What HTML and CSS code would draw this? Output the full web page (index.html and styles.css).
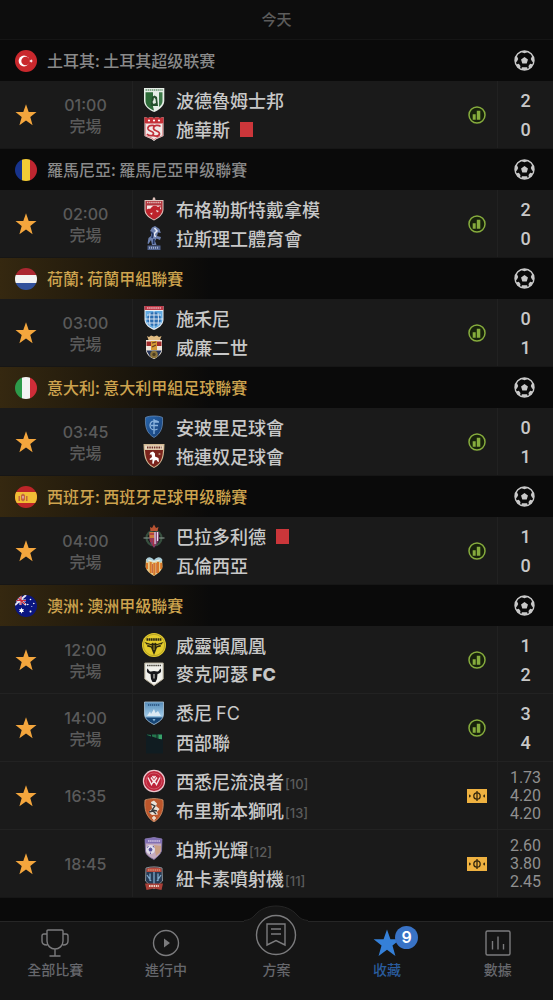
FILE: index.html
```html
<!DOCTYPE html>
<html lang="zh-Hant">
<head>
<meta charset="utf-8">
<meta name="viewport" content="width=device-width, initial-scale=1">
<title>收藏</title>
<link rel="stylesheet" href="styles.css">
</head>
<body>
<svg class="defs" aria-hidden="true">
  <defs>
    <clipPath id="round"><circle cx="11" cy="11" r="11"/></clipPath>
    <clipPath id="ballclip"><circle cx="10" cy="10" r="9"/></clipPath>
    <clipPath id="shield"><path d="M2.5 1H21.500V13C21.500 18 17 21 12 23.500C7 21 2.500 18 2.500 13Z"/></clipPath>
    <linearGradient id="sky" x1="0" y1="0" x2="0" y2="1"><stop offset="0" stop-color="#4f86b5"/><stop offset=".6" stop-color="#9dc8e6"/><stop offset="1" stop-color="#2d6293"/></linearGradient>
    <linearGradient id="blue" x1="0" y1="0" x2="1" y2="1"><stop offset="0" stop-color="#2866ad"/><stop offset="1" stop-color="#163e75"/></linearGradient>
  </defs>
  <symbol id="star" viewBox="0 0 22 22"><path d="M11 .3 13.700 8H21.500L15.300 12.900 17.600 21.300 11 16.400 4.400 21.300 6.700 12.900.5 8H8.300Z"/></symbol>
  <symbol id="ball" viewBox="0 0 20 20">
    <g clip-path="url(#ballclip)" fill="#c9c9c9">
      <path d="M10 6.600 13.300 9 12.100 12.900H7.900L6.700 9Z"/>
      <path d="M6.500 0H13.500L12.600 2.200 10 3 7.400 2.200ZM20 5V11.500L17.300 11.200 16 8.500 17.300 5.500ZM0 5V11.500L2.700 11.200 4 8.500 2.700 5.500ZM1 14 4.600 13.200 6.200 15.200 5.500 19H1ZM19 14 15.400 13.200 13.800 15.200 14.500 19H19ZM7.500 16.500H12.500L13.500 20H6.500Z"/>
    </g>
    <circle cx="10" cy="10" r="9" fill="none" stroke="#c9c9c9" stroke-width="1.400"/>
  </symbol>
  <symbol id="chart" viewBox="0 0 18 18"><circle cx="9" cy="9" r="8" fill="#17210c" stroke="#86ac3d" stroke-width="1.500"/><path d="M4.700 8.200H7.700V13.700H4.700ZM8.800 4.800H12.300V13.700H8.800Z" fill="#86ac3d"/></symbol>
  <symbol id="pitch" viewBox="0 0 20 14"><path fill="#eeb140" d="M0 0H20V14H0Z"/><g fill="none" stroke="#35280e" stroke-width="1.300"><circle cx="10" cy="7" r="3.200"/><path d="M10 2V12"/></g><path d="M2 5.500 3.600 6V8L2 8.500ZM18 5.500 16.400 6V8L18 8.500Z" fill="#35280e"/></symbol>

  <symbol id="flag-tr" viewBox="0 0 22 22"><circle cx="11" cy="11" r="11" fill="#c9282d"/><circle cx="9" cy="11" r="5.400" fill="#fff"/><circle cx="10.600" cy="11" r="4.300" fill="#c9282d"/><path d="M16.300 9.300 16.900 10.500 18.100 11 16.900 11.500 16.300 12.700 15.500 11.700 14.300 11 15.500 10.300Z" fill="#fff"/></symbol>
  <symbol id="flag-ro" viewBox="0 0 22 22"><g clip-path="url(#round)"><path fill="#17338c" d="M0 0H7V22H0Z"/><path fill="#f3cb35" d="M7 0H15V22H7Z"/><path fill="#bf2630" d="M15 0H22V22H15Z"/></g></symbol>
  <symbol id="flag-nl" viewBox="0 0 22 22"><g clip-path="url(#round)"><path fill="#ab2731" d="M0 0H22V7H0Z"/><path fill="#f3f3f3" d="M0 7H22V15H0Z"/><path fill="#31509b" d="M0 15H22V22H0Z"/></g></symbol>
  <symbol id="flag-it" viewBox="0 0 22 22"><g clip-path="url(#round)"><path fill="#2d9a4a" d="M0 0H7V22H0Z"/><path fill="#f3f3f3" d="M7 0H15V22H7Z"/><path fill="#cf2d38" d="M15 0H22V22H15Z"/></g></symbol>
  <symbol id="flag-es" viewBox="0 0 22 22"><g clip-path="url(#round)"><path fill="#bd2528" d="M0 0H22V22H0Z"/><path fill="#f1bd35" d="M0 6H22V17H0Z"/><path fill="#c4673f" d="M3.500 10H5V15H3.500ZM6 9 8 7.500 10 9V14L8 15.500 6 14ZM11 10H12.500V15H11Z"/><path fill="#dba19a" d="M7 10H9V12.500H7Z"/></g></symbol>
  <symbol id="flag-au" viewBox="0 0 22 22"><g clip-path="url(#round)"><path fill="#0b1680" d="M0 0H22V22H0Z"/><path d="M0 0 11 10M11 0 0 10M5.500 0V10M0 5.500H11" stroke="#e7e5ef" stroke-width="2"/><path d="M6 0V10M0 5.500H11M1 1 10 9" stroke="#c92b3c" stroke-width="1.100"/><g fill="#fff"><path d="M6.500 12.500 7.200 14.300 9 14.100 8 15.600 9 17.100 7.200 17 6.500 18.700 5.800 17 4 17.100 5 15.600 4 14.100 5.800 14.300Z"/><circle cx="15.500" cy="4.500" r=".8"/><circle cx="12.800" cy="9.500" r=".8"/><circle cx="18.800" cy="8.500" r=".8"/><circle cx="16.800" cy="11.500" r=".5"/><circle cx="15.500" cy="16.500" r="1"/></g></g></symbol>

  <symbol id="c-bodrum" viewBox="0 0 24 24"><path fill="#e6eee7" d="M2 0H22.300V13C22 18.500 17 22 12.200 24C7 22 2.300 18.500 2 13Z"/><path d="M3.500 2H21" stroke="#2f6b3c" stroke-width="1.200" stroke-dasharray="1.500 .6"/><path fill="#2d6b38" d="M3.500 4.200H11V18.500L12 22.500C7 20.500 3.500 17.500 3.500 13Z"/><path fill="#3d7a49" d="M17 4.200H20.500V13C20.500 15.500 19 17.500 17 19Z"/><path fill="#244f2c" d="M10 9 12.500 7.500 15 9 16 18H8.500Z"/><path fill="#dfe8df" d="M12 9.500 13.500 11 14 15 11.500 16 10.500 14 11.500 12Z"/></symbol>
  <symbol id="c-sivas" viewBox="0 0 24 24"><path fill="#f1e9e8" d="M2.500 0 6 1 9 0 12 1 15 0 18 1 21.500 0V19C18 21 15 21 12 24C9 21 6 21 2.500 19Z"/><path fill="#c53138" d="M2.500 0 6 1 9 0 12 1 15 0 18 1 21.500 0V6.500H2.500Z"/><g fill="#fff"><circle cx="7" cy="3.500" r="1.100"/><circle cx="12" cy="3.500" r="1.100"/><circle cx="17" cy="3.500" r="1.100"/></g><path d="M3.300 7V18.500C6 20.300 9.500 20 12 22.800 14.500 20 18 20.300 20.700 18.500V7" fill="none" stroke="#cf6064" stroke-width=".7"/><path d="M13 9.500C11 7.500 5 8.500 6 12C7 15 12 13.500 11.500 17C11 19.500 6.500 19 5 17M18.500 9.500C16.500 7.500 11.500 8 11.500 11.500C12 14.500 18 13.500 17.500 17C17 20 11.500 19.500 10 17.500" fill="none" stroke="#c1313a" stroke-width="1.700"/></symbol>
  <symbol id="c-dinamo" viewBox="0 0 24 24"><path fill="#dfc1bb" d="M11 .5H13L13.500 3H21.500V13C21 18 17 21 12 23.500C7 21 2.500 18 2.500 13V3H10.500Z"/><path fill="#b3363e" d="M3.500 4H20.500V13C20 17.500 16 20.500 12 22.500 8 20.500 4 17.500 3.500 13Z"/><path d="M5 5.500H19" stroke="#e0bcb9" stroke-width="1.400" stroke-dasharray="1.400 .7"/><path fill="#f2e9e8" d="M5 8.500H19V13L12 21 5 13Z"/><path fill="#bd232c" d="M3.800 14C6 10 7.500 13 9 11 11 8 14 8.500 16 10L19 8.500 18 12 20 13C19 18 15 20.500 12 22C8 20 5 18 3.800 14Z"/><path fill="#f0dfdd" d="M8 16.500 10.500 15.500 10 18ZM14 13 17 14 15 15.500Z"/></symbol>
  <symbol id="c-iasi" viewBox="0 0 24 24"><path fill="#6d80ae" d="M10 1.500 13 0 17.500 3 18.800 7 16 6.500 15 10 19 11 18 14 14.500 12.500 13 15 14.500 19H10L9 14 6.500 18 5.500 17.500 6.500 12 9 10 9.500 6 8 5Z"/><path d="M12.500 2 15 5 12 8 13.500 11" fill="none" stroke="#e7ebf4" stroke-width="1.500"/><path d="M9 6 11 8 10 12M12 13 11.500 18" fill="none" stroke="#243561" stroke-width="1.700"/><path fill="#4f618c" d="M5.500 19.500H18.500V24H5.500Z"/><path d="M7 21.700H17" stroke="#a3afca" stroke-width="2" stroke-dasharray="1 1"/></symbol>
  <symbol id="c-zwolle" viewBox="0 0 24 24"><path fill="#eaeef3" d="M2.500 0H21.500V14C21 19 17 22 12 24C7 22 3 19 2.500 14Z"/><path fill="#bd3c4a" d="M2.500 0H21.500V4H2.500Z"/><path d="M5 2H19" stroke="#e6adb5" stroke-width="1.500" stroke-dasharray="1.500 .6"/><path fill="#61a9e1" d="M3.500 5H20.500V14C20 18.500 16 21 12 22.800C8 21 4 18.500 3.500 14Z"/><circle cx="12" cy="13" r="7" fill="#2b6cb0"/><path d="M12 5V23M3 13H21M8 7 7.500 13 8 19.500M16 7 16.500 13 16 19.500M5 9H19M5 17H19" stroke="#e5edf7" stroke-width=".9" fill="none"/></symbol>
  <symbol id="c-willem" viewBox="0 0 24 24"><path fill="#e1bc83" d="M5 1 7 2 9 .5 12 1.500 15 .5 17 2 19.500 1 18 5H6.500Z"/><path fill="#eee6db" d="M4 5H20V16C19 20 15 22.500 12 24C8 22.500 5 20 4 16Z"/><path fill="#a02c2c" d="M4.500 6.500H19.500V11H4.500Z"/><path fill="#d49a35" d="M9 6H15V15H9Z"/><path d="M10 8 14 7M10 12 14 10" stroke="#653c25" stroke-width="1.200"/><path fill="#25345a" d="M4.300 15.500H19.700L16 21.500H8Z"/><circle cx="12" cy="19.500" r="3.800" fill="#8b7339"/><circle cx="12" cy="19.500" r="1.700" fill="#4c3d23"/></symbol>
  <symbol id="c-empoli" viewBox="0 0 24 24"><path fill="url(#blue)" stroke="#6588b1" stroke-width=".8" d="M3.500 2.500C7 .5 17 .5 20.500 2.500 21 12 19.500 18 12 22.500 4.500 18 3 12 3.500 2.500Z"/><path d="M16 6.500C12 4.500 8 6.500 8 10.500S11.500 16 15.500 14M12 4V19M9 10.500H16M12.500 7H17" fill="none" stroke="#8ab3dd" stroke-width="1.300"/></symbol>
  <symbol id="c-torino" viewBox="0 0 24 24"><path fill="#d1b893" d="M1.500 0H22.500C22 10 22.500 19 12 24C1.500 19 2 10 1.500 0Z"/><path fill="#7a241d" d="M3 6H21C20.500 14 19 19.500 12 23C5 19.500 3.500 14 3 6Z"/><path fill="#ead9c3" d="M2.700 1.500H21.300L21 5.500H3Z"/><path d="M5 3.500H19.500" stroke="#6d3226" stroke-width="2" stroke-dasharray="1.500 .8"/><path d="M8.500 8.500 11 7.500 13 9.500 13 12.500 16.500 14 17 18 15.500 17.500 14.500 16 12.500 16.500 11.500 20 10.300 19.500 10.500 15.500 8 16 7.500 15 10 13 9.500 10.500 7.500 10.500Z" fill="#fff"/><circle cx="17.500" cy="10" r="1.100" fill="#b58d78"/></symbol>
  <symbol id="c-vallad" viewBox="0 0 24 24"><circle cx="12" cy="14" r="7.500" fill="none" stroke="#37503f" stroke-width="2.200"/><path d="M1.500 14H22.500" stroke="#7d8d84" stroke-width="1.200"/><path fill="#b85332" d="M8 3 10 4 12 .5 14 4 16.500 3 15.500 7H8.500Z"/><path fill="#7e3f6b" d="M7.500 8H17V16C16 19.500 13.500 21 12 24C10.500 21 8 19.500 7.500 16Z"/><path fill="#cc7b3c" d="M7.500 8H12V14H7.500Z"/><path d="M13 8V20M15.500 8V17" stroke="#eadeed" stroke-width="1.200"/><path d="M8 10H12M9 14V18M11.500 14V22" stroke="#ac3040" stroke-width="1.300"/></symbol>
  <symbol id="c-valencia" viewBox="0 0 24 24"><path fill="#e8c886" d="M4 6 8 5.500 12 9 16 5.500 20 6 20.500 14C19 19 15 21 12 23C9 21 5 19 3.500 14Z"/><path d="M5 10V16M8.700 9V20M12.300 10V22M16 9V20M19.200 10V16" stroke="#d87729" stroke-width="2"/><path d="M10.500 11V20M14.300 10V20" stroke="#b93f2d" stroke-width=".7"/><path fill="#a9ccd8" d="M4 7C6 3 9 4 12 7 15 4 18 3 20.500 7L19 9.500 15 8 12 9.500 8 8 5 9.500Z"/><path d="M6 7 12 8.500 18 7" stroke="#f0efe1" stroke-width="1.200" fill="none"/></symbol>
  <symbol id="c-wellington" viewBox="0 0 24 24"><circle cx="12" cy="12" r="12" fill="#e4cb2c"/><circle cx="12" cy="12" r="10.700" fill="none" stroke="#aa9823" stroke-width=".8"/><path d="M4.500 6.500H19.500" stroke="#2b2912" stroke-width="2.400" stroke-dasharray="1.700 .5"/><path fill="#28250f" d="M2.500 9 9 11 11 9.500 12 11 13 9.500 15 11 21.500 9 18.500 12.500 19 13.500 15 14.500 13.500 18.500 12 22 10.500 18.500 9 14.500 5 13.500 5.500 12.500Z"/><path d="M5 11.200 10 13M19 11.200 14 13M12 12V17" stroke="#cbb42e" stroke-width=".8"/></symbol>
  <symbol id="c-macarthur" viewBox="0 0 24 24"><path fill="#f1f1ec" stroke="#b2ab96" d="M2.800 1H21.200V17L12 23.500 2.800 17Z"/><path d="M5 3.500H19" stroke="#48453c" stroke-width="1.300" stroke-dasharray="1.500 .6"/><path fill="#15161a" d="M5.500 6.500C7 7.500 6.500 9.500 9 9.500L12 9 15 9.500C17.500 9.500 17 7.500 18.500 6.500 20 9.500 18.500 11.500 15.500 12L15 17 13.500 20H10.500L9 17 8.500 12C5.500 11.500 4 9.500 5.500 6.500Z"/><path d="M12 12V16.500" stroke="#e8e6df" stroke-width="1"/></symbol>
  <symbol id="c-sydney" viewBox="0 0 24 24"><g clip-path="url(#shield)"><path fill="url(#sky)" d="M0 0H24V24H0Z"/><path fill="#dce9f3" d="M5 15 8 10.500 9 13 12 8 13.500 12 16 10 19 15Z"/><path fill="#164575" d="M0 16.500H24V24H0Z"/><path d="M10.500 18 12 20.500 13.500 18Z" fill="#86b2d3"/></g><path d="M2.500 1H21.500V13C21.500 18 17 21 12 23.500 7 21 2.500 18 2.500 13Z" fill="none" stroke="#acc5d8" stroke-width=".8"/><path d="M6 4H18" stroke="#244f7b" stroke-width="1.500" stroke-dasharray="1.300 .7"/></symbol>
  <symbol id="c-western" viewBox="0 0 24 24"><path fill="#101c21" d="M4 4H21V23.500H4Z"/><path fill="#26764d" d="M5 4.500 9 5V6.500L5 5ZM10 4.500H14.500V8L10 6.500ZM15.500 4.200H20V9.500L15.500 8.500Z"/><path fill="#39a168" d="M17 5H20V9H17Z"/></symbol>
  <symbol id="c-wsw" viewBox="0 0 24 24"><circle cx="12" cy="12" r="11.200" fill="#edc4cb"/><circle cx="12" cy="12" r="10" fill="#bd243a"/><circle cx="12" cy="12" r="8" fill="none" stroke="#d66876" stroke-width=".7"/><path d="M6 8.500 9.500 15.500 12 11.500 14.500 15.500 18 8.500M9 8.500 12 13 15 8.500M10.500 7 12 9 13.500 7" fill="none" stroke="#f5e7e8" stroke-width="1.400"/></symbol>
  <symbol id="c-roar" viewBox="0 0 24 24"><path fill="#bc562b" stroke="#dda47a" stroke-width=".7" d="M3 2C9 0 15 0 21 2 22 11 20 19 12 24 4 19 2 11 3 2Z"/><path fill="#eae2d7" d="M9 4 12 2.500 15 5.500 14 8 17.500 11 15 14 16 16.500 10 17 6.500 14 10 10.500Z"/><path d="M9 6 13 8 10 12 15 13M7 14 11 13 14 16" fill="none" stroke="#383a3c" stroke-width="1.300"/><path d="M12 18V22.500M10 20H14" stroke="#eee2d5" stroke-width="1.500"/></symbol>
  <symbol id="c-perth" viewBox="0 0 24 24"><path fill="#c4abc0" stroke="#8072a5" stroke-width=".8" d="M3 2 12 .5 20 2 19.500 14C18 18 15 20 12 22.500 7 20 4 18 3.500 14Z"/><path fill="#8170b3" d="M3 2 12 .5 20 2V6.500H3.200Z"/><path d="M6 4H18" stroke="#d3c6e7" stroke-width="1.500" stroke-dasharray="1.500 .6"/><path fill="#c99f86" d="M12 8 19 9 18.500 15 14 19Z"/><circle cx="8.500" cy="12.500" r="4.500" fill="#dfdce9"/><path d="M8.500 11 10 12 9.500 14H7.500L7 12ZM5 10.500 6.500 9.500M8.500 15.500V17M11 9 12 10.500" fill="#56509b" stroke="#56509b"/></symbol>
  <symbol id="c-newcastle" viewBox="0 0 24 24"><path fill="#263a54" stroke="#a4a9ad" stroke-width=".8" d="M4 2C9 .5 15 .5 20 2L20.500 15 12 23 3.500 15Z"/><path fill="#b5483b" d="M4.500 2.500C9 1 15 1 19.500 2.500V6H4.500Z"/><path d="M6 4H18" stroke="#e2af8c" stroke-width="1.200" stroke-dasharray="1.500 .7"/><path d="M12 6V18M8 7.500V15M16 7.500V15M5 9 9 15M19 9 15 15" stroke="#7ea8ca" stroke-width="1.300"/><path fill="#aa4038" d="M3 17.500H21L19.500 24 12 22.500 4.500 24Z"/><path d="M7 20H17" stroke="#ebd5c9" stroke-width="2" stroke-dasharray="1.500 .8"/></symbol>
</svg>

<div class="app">
  <header class="date"><h1>今天</h1></header>
  <main class="list">
    <section class="league">
      <header class="league-head"><svg class="flag"><use href="#flag-tr"/></svg><h2>土耳其: 土耳其超级联赛</h2><svg class="ball"><use href="#ball"/></svg></header>
      <article class="match">
        <button class="fav" aria-label="取消收藏"><svg><use href="#star"/></svg></button>
        <div class="time"><time>01:00</time><span>完場</span></div>
        <div class="teams">
          <div class="team"><svg><use href="#c-bodrum"/></svg><span>波德魯姆士邦</span></div>
          <div class="team"><svg><use href="#c-sivas"/></svg><span>施華斯</span><i class="red-card"></i></div>
        </div>
        <button class="tool" aria-label="分析"><svg class="chart"><use href="#chart"/></svg></button>
        <div class="score"><span>2</span><span>0</span></div>
      </article>
    </section>
    <section class="league">
      <header class="league-head"><svg class="flag"><use href="#flag-ro"/></svg><h2>羅馬尼亞: 羅馬尼亞甲级聯賽</h2><svg class="ball"><use href="#ball"/></svg></header>
      <article class="match">
        <button class="fav" aria-label="取消收藏"><svg><use href="#star"/></svg></button>
        <div class="time"><time>02:00</time><span>完場</span></div>
        <div class="teams">
          <div class="team"><svg><use href="#c-dinamo"/></svg><span>布格勒斯特戴拿模</span></div>
          <div class="team"><svg><use href="#c-iasi"/></svg><span>拉斯理工體育會</span></div>
        </div>
        <button class="tool" aria-label="分析"><svg class="chart"><use href="#chart"/></svg></button>
        <div class="score"><span>2</span><span>0</span></div>
      </article>
    </section>
    <section class="league top">
      <header class="league-head"><svg class="flag"><use href="#flag-nl"/></svg><h2>荷蘭: 荷蘭甲組聯賽</h2><svg class="ball"><use href="#ball"/></svg></header>
      <article class="match">
        <button class="fav" aria-label="取消收藏"><svg><use href="#star"/></svg></button>
        <div class="time"><time>03:00</time><span>完場</span></div>
        <div class="teams">
          <div class="team"><svg><use href="#c-zwolle"/></svg><span>施禾尼</span></div>
          <div class="team"><svg><use href="#c-willem"/></svg><span>威廉二世</span></div>
        </div>
        <button class="tool" aria-label="分析"><svg class="chart"><use href="#chart"/></svg></button>
        <div class="score"><span>0</span><span>1</span></div>
      </article>
    </section>
    <section class="league top">
      <header class="league-head"><svg class="flag"><use href="#flag-it"/></svg><h2>意大利: 意大利甲組足球聯賽</h2><svg class="ball"><use href="#ball"/></svg></header>
      <article class="match">
        <button class="fav" aria-label="取消收藏"><svg><use href="#star"/></svg></button>
        <div class="time"><time>03:45</time><span>完場</span></div>
        <div class="teams">
          <div class="team"><svg><use href="#c-empoli"/></svg><span>安玻里足球會</span></div>
          <div class="team"><svg><use href="#c-torino"/></svg><span>拖連奴足球會</span></div>
        </div>
        <button class="tool" aria-label="分析"><svg class="chart"><use href="#chart"/></svg></button>
        <div class="score"><span>0</span><span>1</span></div>
      </article>
    </section>
    <section class="league top">
      <header class="league-head"><svg class="flag"><use href="#flag-es"/></svg><h2>西班牙: 西班牙足球甲级聯賽</h2><svg class="ball"><use href="#ball"/></svg></header>
      <article class="match">
        <button class="fav" aria-label="取消收藏"><svg><use href="#star"/></svg></button>
        <div class="time"><time>04:00</time><span>完場</span></div>
        <div class="teams">
          <div class="team"><svg><use href="#c-vallad"/></svg><span>巴拉多利德</span><i class="red-card"></i></div>
          <div class="team"><svg><use href="#c-valencia"/></svg><span>瓦倫西亞</span></div>
        </div>
        <button class="tool" aria-label="分析"><svg class="chart"><use href="#chart"/></svg></button>
        <div class="score"><span>1</span><span>0</span></div>
      </article>
    </section>
    <section class="league top">
      <header class="league-head"><svg class="flag"><use href="#flag-au"/></svg><h2>澳洲: 澳洲甲級聯賽</h2><svg class="ball"><use href="#ball"/></svg></header>
      <article class="match">
        <button class="fav" aria-label="取消收藏"><svg><use href="#star"/></svg></button>
        <div class="time"><time>12:00</time><span>完場</span></div>
        <div class="teams">
          <div class="team"><svg><use href="#c-wellington"/></svg><span>威靈頓鳳凰</span></div>
          <div class="team"><svg><use href="#c-macarthur"/></svg><span>麥克阿瑟<b class="latin heavy">FC</b></span></div>
        </div>
        <button class="tool" aria-label="分析"><svg class="chart"><use href="#chart"/></svg></button>
        <div class="score"><span>1</span><span>2</span></div>
      </article>
      <article class="match">
        <button class="fav" aria-label="取消收藏"><svg><use href="#star"/></svg></button>
        <div class="time"><time>14:00</time><span>完場</span></div>
        <div class="teams">
          <div class="team"><svg><use href="#c-sydney"/></svg><span>悉尼<span class="latin">FC</span></span></div>
          <div class="team"><svg><use href="#c-western"/></svg><span>西部聯</span></div>
        </div>
        <button class="tool" aria-label="分析"><svg class="chart"><use href="#chart"/></svg></button>
        <div class="score"><span>3</span><span>4</span></div>
      </article>
      <article class="match">
        <button class="fav" aria-label="取消收藏"><svg><use href="#star"/></svg></button>
        <div class="time"><time>16:35</time></div>
        <div class="teams">
          <div class="team"><svg><use href="#c-wsw"/></svg><span>西悉尼流浪者<small>[10]</small></span></div>
          <div class="team"><svg><use href="#c-roar"/></svg><span>布里斯本獅吼<small>[13]</small></span></div>
        </div>
        <button class="tool" aria-label="陣容"><svg class="pitch"><use href="#pitch"/></svg></button>
        <div class="odds"><span>1.73</span><span>4.20</span><span>4.20</span></div>
      </article>
      <article class="match">
        <button class="fav" aria-label="取消收藏"><svg><use href="#star"/></svg></button>
        <div class="time"><time>18:45</time></div>
        <div class="teams">
          <div class="team"><svg><use href="#c-perth"/></svg><span>珀斯光輝<small>[12]</small></span></div>
          <div class="team"><svg><use href="#c-newcastle"/></svg><span>紐卡素噴射機<small>[11]</small></span></div>
        </div>
        <button class="tool" aria-label="陣容"><svg class="pitch"><use href="#pitch"/></svg></button>
        <div class="odds"><span>2.60</span><span>3.80</span><span>2.45</span></div>
      </article>
    </section>
  </main>

  <nav class="tabs">
    <a class="tab" href="#all"><svg class="tab-icon" viewBox="0 0 28 28"><path d="M7 1H21Q22 1 22 2V12C22 17 18 20 14 20S6 17 6 12V2Q6 1 7 1ZM6 5H3Q1 5 1 7V12Q1 16 6 16M22 5H25Q27 5 27 7V12Q27 16 22 16M14 20V27M8.500 27H19.500"/></svg><span>全部比賽</span></a>
    <a class="tab" href="#live"><svg class="tab-icon" viewBox="0 0 28 28"><circle cx="14" cy="14" r="12.500"/><path class="solid" d="M12 9.500 18 14 12 18.500Z"/></svg><span>進行中</span></a>
    <a class="tab center" href="#plan">
      <svg class="hump" viewBox="0 0 64 18"><path class="hump-fill" d="M0 16C6 15 8 13 11 10C16 4 24 1 32 1S48 4 53 10C56 13 58 15 64 16V18H0Z"/><path class="hump-line" d="M0 15.500C6 15 8 13 11 10C16 4 24 1 32 1S48 4 53 10C56 13 58 15 64 15.500"/></svg>
      <svg class="plan-icon" viewBox="0 0 42 42"><circle cx="21" cy="21" r="19.500"/><path d="M12 10H30V31L21 26.500 12 31ZM16 15H26M16 20H26"/></svg><span>方案</span></a>
    <a class="tab active" href="#fav"><svg class="tab-icon star-icon" viewBox="0 0 22 22"><use href="#star"/></svg><b class="badge">9</b><span>收藏</span></a>
    <a class="tab" href="#data"><svg class="tab-icon" viewBox="0 0 28 28"><rect x="2" y="2" width="24" height="24" rx="1.500"/><path d="M8.500 12V20.500M14 7.500V20.500M19.500 15V20.500"/></svg><span>數據</span></a>
  </nav>
</div>
</body>
</html>
```
FILE: styles.css
```css
* { box-sizing: border-box; }

body {
  margin: 0;
  background: #0a0a0a;
  color: #c8c8c8;
  font-family: "Noto Sans CJK TC", "Noto Sans CJK SC", sans-serif;
}

h1, h2 { margin: 0; font-weight: 400; }

button {
  padding: 0;
  border: 0;
  background: none;
  cursor: pointer;
}

svg { display: block; flex: none; }

.defs { position: absolute; width: 0; height: 0; }

.app {
  display: flex;
  flex-direction: column;
  min-height: 100vh;
}

.date {
  height: 40px;
  background: #0d0d0d;
  border-bottom: 1px solid #151515;
  text-align: center;
}

.date h1 {
  font-size: 15px;
  line-height: 38px;
  font-weight: 500;
  color: #5c5c5c;
}

.list { flex: 1; }

.league { border-bottom: 1px solid #161616; }

.league-head {
  display: flex;
  align-items: center;
  height: 41px;
  padding: 0 18px 0 15px;
  background: #0a0a0a;
}

.league-head h2 {
  flex: 1;
  margin-left: 10px;
  padding-bottom: 2px;
  font-size: 16px;
  line-height: 24px;
  font-weight: 500;
  color: #898989;
}

.top .league-head { background: linear-gradient(90deg, #352810 0, #241c0d 15%, #0a0a0a 38%); }
.top .league-head h2 { color: #cda34e; }

.flag { width: 22px; height: 22px; }
.ball { width: 21px; height: 21px; }

.match {
  display: grid;
  grid-template-columns: 39px 94px 1fr 40px 56px;
  min-height: 67px;
  background: #1a1a1a;
}

.match + .match { min-height: 68px; border-top: 1px solid #222; }

.fav {
  display: flex;
  align-items: center;
  padding-left: 15px;
}

.fav svg { width: 22px; height: 22px; fill: #f4a63d; }

.time {
  display: flex;
  flex-direction: column;
  justify-content: center;
  border-right: 1px solid #212121;
  color: #5a5a5a;
  font-size: 16px;
  line-height: 20px;
  font-weight: 500;
  text-align: center;
}

.time time { font-family: Inter, sans-serif; }

.teams {
  display: flex;
  flex-direction: column;
  justify-content: center;
  padding-left: 9px;
}

.team {
  display: flex;
  align-items: center;
  height: 29px;
  font-size: 18px;
  line-height: 28px;
  font-weight: 500;
  white-space: nowrap;
}

.team svg { width: 24px; height: 24px; margin-right: 10px; }

.team small {
  margin-left: 1px;
  font: 500 13px Inter, sans-serif;
  color: #5c5c5c;
}

.latin { margin-left: 4px; font-family: Inter, sans-serif; font-weight: 400; }
.latin.heavy { font-weight: 800; }

.red-card {
  width: 13px;
  height: 15px;
  margin-left: 10px;
  background: #cb363a;
}

.tool { display: flex; align-items: center; justify-content: center; }
.chart { width: 18px; height: 18px; }
.pitch { width: 20px; height: 14px; }

.score, .odds {
  display: flex;
  flex-direction: column;
  justify-content: center;
  border-left: 1px solid #212121;
  font-family: Roboto, sans-serif;
  text-align: center;
}

.score { font-size: 18px; line-height: 29px; font-weight: 500; }
.odds { font-size: 16px; line-height: 18px; color: #909090; }

.tabs {
  position: sticky;
  bottom: 0;
  display: grid;
  grid-template-columns: repeat(5, 1fr);
  height: 79px;
  background: #151515;
  border-top: 1px solid #262626;
}

.tab {
  position: relative;
  display: flex;
  flex-direction: column;
  align-items: center;
  padding-top: 7px;
  color: #66676c;
  font-size: 14px;
  line-height: 20px;
  font-weight: 500;
  text-decoration: none;
}

.tab span { margin-top: 2px; }

.tab-icon, .plan-icon {
  width: 28px;
  height: 28px;
  fill: none;
  stroke: #7b7b7d;
  stroke-width: 1.4;
}

.solid { fill: #7b7b7d; stroke: none; }

.center { padding-top: 0; }
.center span { margin-top: 3px; }

.plan-icon {
  position: relative;
  width: 42px;
  height: 42px;
  margin-top: -8px;
}

.hump {
  position: absolute;
  top: -17px;
  left: 50%;
  width: 64px;
  height: 18px;
  margin-left: -32px;
}

.hump-fill { fill: #151515; }
.hump-line { fill: none; stroke: #262626; }

.active { color: #2a5c9e; }
.star-icon { fill: #3580d8; stroke: none; }

.badge {
  position: absolute;
  top: 4px;
  left: 50%;
  width: 23px;
  height: 23px;
  margin-left: 8px;
  border-radius: 50%;
  background: #3973c6;
  color: #fff;
  font: 600 16px/23px Inter, sans-serif;
  text-align: center;
}
```
